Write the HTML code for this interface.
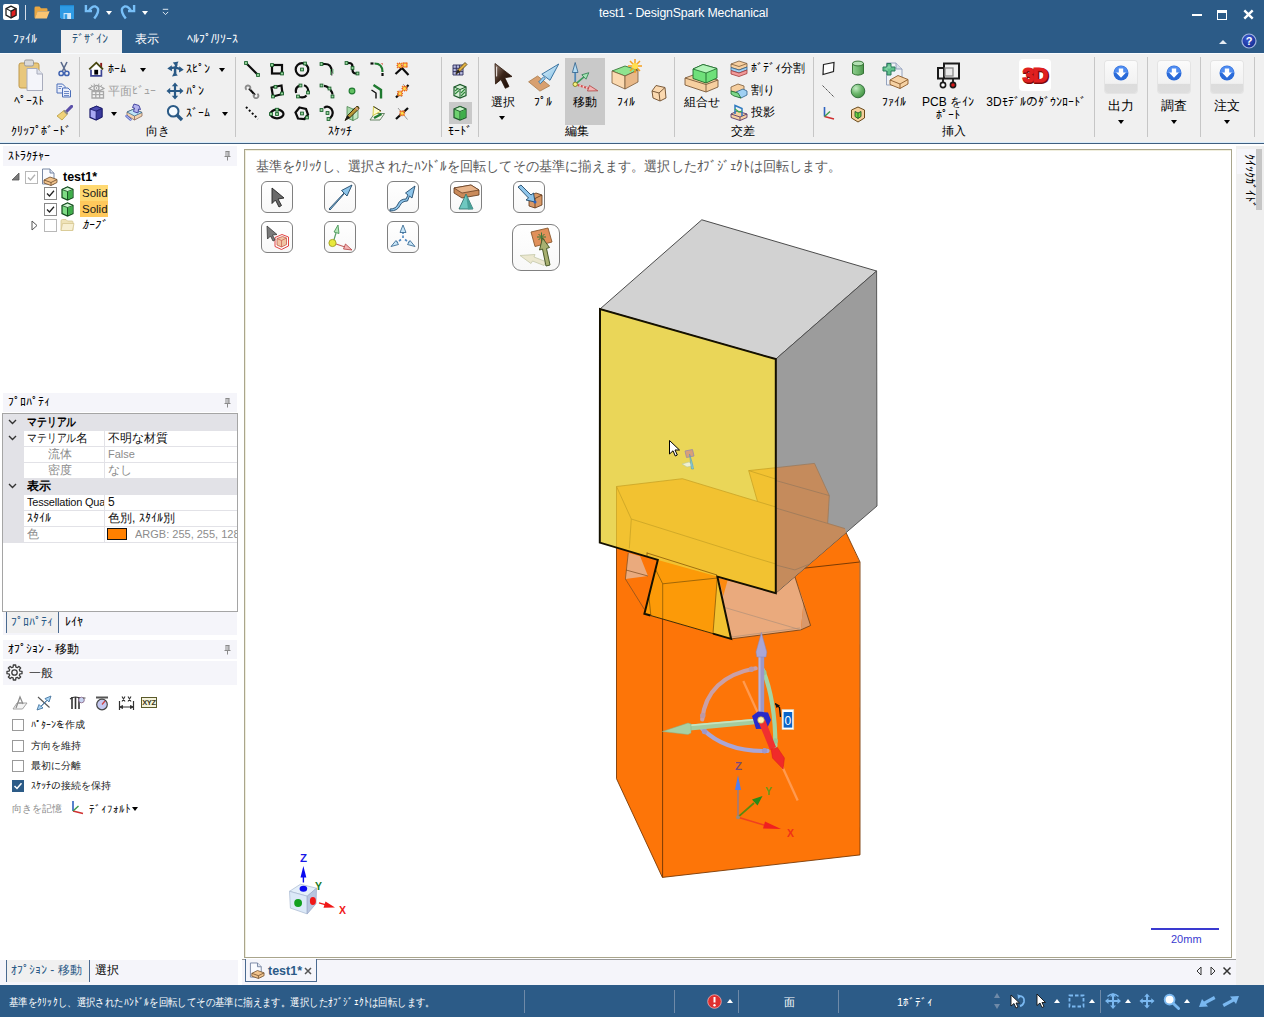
<!DOCTYPE html>
<html lang="ja">
<head>
<meta charset="utf-8">
<title>test1 - DesignSpark Mechanical</title>
<style>
*{box-sizing:border-box;margin:0;padding:0}
html,body{width:1264px;height:1017px;overflow:hidden;background:#fff}
body{position:relative;font-family:"Liberation Sans",sans-serif;font-size:12px;color:#000;line-height:1}
.a{position:absolute}
.t{position:absolute;white-space:nowrap;line-height:14px;height:14px}
.c{text-align:center}
/* title */
#title{left:0;top:0;width:1264px;height:53px;background:#2c5b87}
#title .cap{left:599px;top:5px;color:#fff;font-size:12.3px;line-height:16px;height:16px;letter-spacing:-.15px}
.tab{color:#fff;font-size:12px;top:32px}
#tabon{left:61px;top:30px;width:61px;height:23px;background:#f0f0f0}
/* ribbon */
#ribbon{left:0;top:53px;width:1264px;height:89px;background:#f0f0f0}
#ribline{left:0;top:142px;width:1264px;height:2px;background:#3f5f80;border-top:1px solid #d9ecfb}
.sep{position:absolute;top:57px;width:1px;height:80px;background:#c6c6c6}
.gl{top:124px;font-size:12px}
.dd{position:absolute;width:0;height:0;border-left:3.5px solid transparent;border-right:3.5px solid transparent;border-top:4px solid #000}
.hl{background:#c9c9c9}
/* panels */
.ph{left:3px;width:234px;height:20px;background:#f5f5fa}
.ph .t{left:5px;top:3px}
.pin{position:absolute;right:6px;top:5px;width:7px;height:10px}
/* status */
#status{left:0;top:985px;width:1264px;height:32px;background:#2c5b87;color:#fff}
.ssep{position:absolute;top:5px;width:1px;height:23px;background:#6f8aa8}
</style>
</head>
<body>
<!-- TITLE BAR -->
<div id="title" class="a">
  <div class="t cap">test1 - DesignSpark Mechanical</div>

  <!-- app icon -->
  <svg class="a" style="left:3px;top:4px" width="16" height="16" viewBox="0 0 16 16"><rect width="16" height="16" rx="2" fill="#fff"/><path d="M8 2.2 13 4.6 13 11.2 8 13.8 3 11.2 3 4.6Z" fill="#fff" stroke="#222" stroke-width="1.3" stroke-linejoin="round"/><path d="M8 7.2 13 4.6 13 11.2 8 13.8Z" fill="#e02020" stroke="#222" stroke-width="1.1" stroke-linejoin="round"/><path d="M3 4.6 8 7.2 13 4.6" fill="none" stroke="#222" stroke-width="1.1"/></svg>
  <div class="a" style="left:25px;top:5px;width:1px;height:15px;background:#d5dde8"></div>
  <!-- open -->
  <svg class="a" style="left:34px;top:6px" width="16" height="13" viewBox="0 0 16 13"><path d="M0.5 2Q0.5 0.6 2 0.6H5.5L7 2.2H12.5Q13.5 2.2 13.5 3.4V5H4L1.2 12.4Q0.5 12.4 0.5 11Z" fill="#e9a640"/><path d="M3.6 5.2H15.6L12.8 12.4H0.9Z" fill="#fbc572"/></svg>
  <!-- save -->
  <svg class="a" style="left:60px;top:5px" width="14" height="14" viewBox="0 0 14 14"><path d="M0 0H14V14H1.5L0 12.5Z" fill="#2f9be4"/><rect x="3.6" y="8" width="7.4" height="6" fill="#cfe6f7"/><rect x="4.6" y="9.2" width="2.6" height="4.8" fill="#2f9be4"/><rect x="0" y="0" width="14" height="1.2" fill="#1f86cf"/></svg>
  <!-- undo -->
  <svg class="a" style="left:84px;top:4px" width="17" height="16" viewBox="0 0 17 16"><path d="M5 6.800Q8 1.800 11.500 2.500Q15.200 4 13.800 8.300Q13 11 10.200 14.400" fill="none" stroke="#78c0f8" stroke-width="2.400"/><path d="M1.900 .9V7.100H8" fill="none" stroke="#78c0f8" stroke-width="2.400"/></svg>
  <div class="dd" style="left:106px;top:11px;border-top-color:#fff"></div>
  <!-- redo -->
  <svg class="a" style="left:119px;top:4px" width="17" height="16" viewBox="0 0 17 16"><g transform="translate(17,0) scale(-1,1)"><path d="M5 6.800Q8 1.800 11.500 2.500Q15.200 4 13.800 8.300Q13 11 10.200 14.400" fill="none" stroke="#78c0f8" stroke-width="2.400"/><path d="M1.900 .9V7.100H8" fill="none" stroke="#78c0f8" stroke-width="2.400"/></g></svg>
  <div class="dd" style="left:142px;top:11px;border-top-color:#fff"></div>
  <!-- customize -->
  <svg class="a" style="left:162px;top:8px" width="7" height="8" viewBox="0 0 7 8"><path d="M.8 1.300H6.200" stroke="#dfe8f0" stroke-width="1"/><path d="M.8 3.900 3.500 6.600 6.200 3.900" fill="none" stroke="#dfe8f0" stroke-width="1"/></svg>
  <!-- window controls -->
  <div class="a" style="left:1192px;top:14px;width:10px;height:2px;background:#fff"></div>
  <div class="a" style="left:1217px;top:10px;width:10px;height:10px;border:1px solid #fff;border-top-width:3px"></div>
  <svg class="a" style="left:1243px;top:9px" width="11" height="11" viewBox="0 0 11 11"><path d="M1.300 1.300 9.700 9.700M9.700 1.300 1.300 9.700" stroke="#fff" stroke-width="2.400"/></svg>
  <div class="a" style="left:1219px;top:40px;width:0;height:0;border-left:4px solid transparent;border-right:4px solid transparent;border-bottom:4px solid #e6ecf3"></div>
  <svg class="a" style="left:1241px;top:33px" width="16" height="16" viewBox="0 0 16 16"><defs><radialGradient id="ghelp" cx=".4" cy=".3" r=".8"><stop offset="0" stop-color="#3a5ad0"/><stop offset="1" stop-color="#10268a"/></radialGradient></defs><circle cx="8" cy="8" r="7" fill="url(#ghelp)" stroke="#a4b6e0" stroke-width="1.200"/><text x="8" y="12" text-anchor="middle" font-family="Liberation Sans" font-weight="bold" font-size="11" fill="#fff">?</text></svg>
  <div id="tabon" class="a"></div>
  <div class="t tab" style="left:13px">ﾌｧｲﾙ</div>
  <div class="t tab" style="left:72px;color:#2c5478">ﾃﾞｻﾞｲﾝ</div>
  <div class="t tab" style="left:135px">表示</div>
  <div class="t tab" style="left:187px">ﾍﾙﾌﾟ/ﾘｿｰｽ</div>
</div>
<!-- RIBBON -->
<div id="ribbon" class="a"></div>
<div id="ribline" class="a"></div>
<div class="a" style="left:0;top:53px;width:1264px;height:1px;background:#f8fbfe"></div>

<!-- separators -->
<div class="sep" style="left:79px"></div><div class="sep" style="left:235px"></div><div class="sep" style="left:441px"></div><div class="sep" style="left:478px"></div><div class="sep" style="left:674px"></div><div class="sep" style="left:813px"></div><div class="sep" style="left:1094px"></div><div class="sep" style="left:1147px"></div><div class="sep" style="left:1200px"></div><div class="sep" style="left:1254px"></div>
<!-- CLIPBOARD -->
<svg class="a" style="left:18px;top:59px" width="26" height="33" viewBox="0 0 26 33"><rect x="1" y="4" width="20" height="25" rx="2" fill="#e8c77c" stroke="#c09a4c"/><rect x="6.5" y="1" width="9" height="6" rx="1.5" fill="#d9d9d9" stroke="#9a9a9a"/><path d="M9 9.5H19L24.5 15V31.5H9Z" fill="#f4f5fa" stroke="#a8acbc"/><path d="M19 9.5V15H24.5" fill="#dfe2ec" stroke="#a8acbc"/></svg>
<div class="t c" style="left:6px;top:94px;width:46px;overflow:hidden">ﾍﾟｰｽﾄ</div>
<div class="t c gl" style="left:4px;width:74px;overflow:hidden">ｸﾘｯﾌﾟﾎﾞｰﾄﾞ</div>
<svg class="a" style="left:57px;top:61px" width="14" height="16" viewBox="0 0 14 16"><path d="M4 1 8.5 10M10 1 5.5 10" stroke="#5a6a8c" stroke-width="1.6" fill="none"/><circle cx="4.2" cy="12.4" r="2.2" fill="none" stroke="#3f62b0" stroke-width="1.5"/><circle cx="9.8" cy="12.4" r="2.2" fill="none" stroke="#3f62b0" stroke-width="1.5"/></svg>
<svg class="a" style="left:56px;top:83px" width="16" height="15" viewBox="0 0 16 15"><path d="M1 1H6.5L9 3.5V10H1Z" fill="#e9eefb" stroke="#4c6fb8"/><path d="M6.5 5H12L14.5 7.5V14H6.5Z" fill="#e9eefb" stroke="#4c6fb8"/><path d="M8 8.5H13M8 10.5H13M8 12.5H13M2.5 3.5H6M2.5 5.5H5" stroke="#4c6fb8" stroke-width=".8"/></svg>
<svg class="a" style="left:56px;top:105px" width="17" height="16" viewBox="0 0 17 16"><path d="M10.5 6.5 15.6 1.4" stroke="#5a4fa8" stroke-width="3" stroke-linecap="round"/><path d="M1 11 8 5.5 11.5 9 6 15Z" fill="#f0d27a" stroke="#b89a3c" stroke-width=".8"/><path d="M8 5.5 11.5 9" stroke="#8a8a8a" stroke-width="2"/></svg>
<!-- ORIENT -->
<svg class="a" style="left:88px;top:61px" width="16" height="16" viewBox="0 0 16 16"><rect x="12.200" y="1.900" width="1.900" height="5" fill="#8a1a1a"/><path d="M3 8.400V14.800H13.400V8.400" fill="#fff" stroke="#3c4494" stroke-width="1.700"/><path d="M3 8.600 8.300 3.500 13.400 8.600Z" fill="#fff"/><rect x="6.300" y="8.800" width="3.800" height="4.800" fill="#000"/><path d="M1.200 8.300 8.300 1.700 15 8.300" fill="none" stroke="#47470f" stroke-width="1.800"/></svg>
<div class="t" style="left:108px;top:62px;width:26px;overflow:hidden">ﾎｰﾑ</div><div class="dd" style="left:140px;top:68px"></div>
<svg class="a" style="left:88px;top:83px" width="17" height="16" viewBox="0 0 17 16"><path d="M1 5.500Q8.500 -.5 16 5.500Q8.500 10.500 1 5.500Z" fill="#f4f4f4" stroke="#a4a4a4" stroke-width="1.200"/><circle cx="8.500" cy="5" r="2.500" fill="#fff" stroke="#a4a4a4" stroke-width="1.300"/><circle cx="8.500" cy="5" r=".9" fill="#a4a4a4"/><path d="M3 1.800 4 3M6 .6 6.500 2M11 .6 10.500 2M14 1.800 13 3" stroke="#a4a4a4" stroke-width=".9"/><path d="M4 8.500H15.500V15H4ZM4 11.700H15.500M7.800 8.500V15M11.600 8.500V15" fill="#f4f4f4" stroke="#a8a8a8" stroke-width="1.300"/></svg>
<div class="t" style="left:108px;top:84px;width:50px;overflow:hidden;color:#a2a2a2">平面ﾋﾞｭｰ</div>
<svg class="a" style="left:89px;top:105px" width="14" height="16" viewBox="0 0 14 16"><path d="M1 4 7.500 1.200 13 3.600V12L7 15 1 12.400Z" fill="#a8a8f4" stroke="#1a1a6a" stroke-width="1.200" stroke-linejoin="round"/><path d="M1 4 7.500 1.200 13 3.600 7.200 6.200Z" fill="#4c4cb0" stroke="#1a1a6a" stroke-width=".8"/><path d="M7.200 6.200 13 3.600V12L7 15Z" fill="#3a3a9c" stroke="#1a1a6a" stroke-width=".8"/></svg>
<div class="dd" style="left:111px;top:112px"></div>
<svg class="a" style="left:125px;top:103px" width="18" height="18" viewBox="0 0 18 18"><path d="M2 9 9 6 17 9.500V13L9.500 17 2 12.500Z" fill="#f2d2b0" stroke="#8a6a5a" stroke-width=".8"/><path d="M2 9 9 6 17 9.500 9.500 13Z" fill="#bfe4f6" stroke="#3a6a8a" stroke-width=".8"/><path d="M9.500 13V17" stroke="#8a6a5a" stroke-width=".8"/><path d="M9 1 14 2.500 15.500 6.500 13.500 6 13 10 8.500 8.500 9.500 5 7.500 4.500Z" fill="#b4b4ee" stroke="#3a3a9a" stroke-width=".9"/><path d="M1.500 13 5.500 16.500" stroke="#5a6ac8" stroke-width="2.400" stroke-linecap="round"/><path d="M1.500 13 5.500 16.500" stroke="#c8d0f4" stroke-width="1" stroke-linecap="round"/></svg>
<svg class="a" style="left:167px;top:61px" width="17" height="16" viewBox="0 0 17 16"><path d="M3 7.600Q8 5.200 13.500 8.300" fill="none" stroke="#2a5a86" stroke-width="2.300"/><path d="M9.700 3Q7.200 8 8.300 13" fill="none" stroke="#2a5a86" stroke-width="2.300"/><path d="M.3 7.600 4.800 4.300 5 10.300ZM16.700 8.800 12.300 5.300 12 11.500ZM11.500 .6 5.800 1.600 9.200 5.800ZM5 15.600 10.800 14.400 7.500 10.500Z" fill="#2a5a86"/></svg>
<div class="t" style="left:186px;top:62px;width:26px;overflow:hidden">ｽﾋﾟﾝ</div><div class="dd" style="left:219px;top:68px"></div>
<svg class="a" style="left:166px;top:82px" width="18" height="18" viewBox="0 0 18 18"><path d="M9 .5 12.2 4.2H10.100V7.900H13.800V5.800L17.500 9 13.800 12.200V10.100H10.100V13.800H12.200L9 17.500 5.800 13.800H7.900V10.100H4.200V12.200L.5 9 4.200 5.800V7.900H7.900V4.200H5.800Z" fill="#2a5a86"/></svg>
<div class="t" style="left:186px;top:84px;width:20px;overflow:hidden">ﾊﾟﾝ</div>
<svg class="a" style="left:166px;top:104px" width="18" height="18" viewBox="0 0 18 18"><circle cx="7.200" cy="7.200" r="5.300" fill="#f6fbff" stroke="#2a5a86" stroke-width="2"/><path d="M11 11 16 16" stroke="#2a5a86" stroke-width="3.300"/></svg>
<div class="t" style="left:186px;top:106px;width:28px;overflow:hidden">ｽﾞｰﾑ</div><div class="dd" style="left:222px;top:112px"></div>
<div class="t c gl" style="left:140px;width:36px;overflow:hidden">向き</div>
<!-- SKETCH -->
<svg class="a" style="left:244px;top:61px" width="16" height="16" viewBox="0 0 16 16"><path d="M2.500 2.500 13.500 13.500" stroke="#0c0c0c" stroke-width="2.200" fill="none"/><rect x="0.6000000000000001" y="0.6000000000000001" width="2.8" height="2.8" fill="#9ed8a2" stroke="#17602a" stroke-width=".9"/><rect x="12.6" y="12.6" width="2.8" height="2.8" fill="#9ed8a2" stroke="#17602a" stroke-width=".9"/></svg>
<svg class="a" style="left:269px;top:61px" width="16" height="16" viewBox="0 0 16 16"><rect x="3" y="4" width="10" height="8.500" stroke="#0c0c0c" stroke-width="2.200" fill="none"/><rect x="1.6" y="2.6" width="2.8" height="2.8" fill="#9ed8a2" stroke="#17602a" stroke-width=".9"/><rect x="11.6" y="11.1" width="2.8" height="2.8" fill="#9ed8a2" stroke="#17602a" stroke-width=".9"/></svg>
<svg class="a" style="left:294px;top:61px" width="16" height="16" viewBox="0 0 16 16"><circle cx="8" cy="8.500" r="6.300" stroke="#0c0c0c" stroke-width="2.200" fill="none"/><rect x="6.6" y="7.1" width="2.8" height="2.8" fill="#9ed8a2" stroke="#17602a" stroke-width=".9"/><rect x="9.6" y="1.1" width="2.8" height="2.8" fill="#9ed8a2" stroke="#17602a" stroke-width=".9"/></svg>
<svg class="a" style="left:319px;top:61px" width="16" height="16" viewBox="0 0 16 16"><path d="M2.500 3H6Q12.500 3 12.500 10V12" stroke="#0c0c0c" stroke-width="2.200" fill="none"/><path d="M11.500 8V14M14 8V13" stroke="#6fb87c" stroke-width="1"/><path d="M12.700 10.500V14.500" stroke="#555" stroke-width="1.400"/><rect x="1.1" y="1.6" width="2.8" height="2.8" fill="#9ed8a2" stroke="#17602a" stroke-width=".9"/></svg>
<svg class="a" style="left:344px;top:61px" width="16" height="16" viewBox="0 0 16 16"><path d="M2.500 2H5Q8.500 2 8.500 5.500V8.500Q8.500 12.500 12 12.500H13" stroke="#0c0c0c" stroke-width="2.200" fill="none"/><rect x="1.1" y="0.6000000000000001" width="2.8" height="2.8" fill="#9ed8a2" stroke="#17602a" stroke-width=".9"/><rect x="7.1" y="5.6" width="2.8" height="2.8" fill="#9ed8a2" stroke="#17602a" stroke-width=".9"/><rect x="12.1" y="11.1" width="2.8" height="2.8" fill="#9ed8a2" stroke="#17602a" stroke-width=".9"/></svg>
<svg class="a" style="left:369px;top:61px" width="16" height="16" viewBox="0 0 16 16"><path d="M1.500 2.500H4.500" stroke="#0c0c0c" stroke-width="2.200" fill="none"/><path d="M13.500 12V15" stroke="#0c0c0c" stroke-width="2.200" fill="none"/><path d="M5.500 2.500Q13.500 2.500 13.500 11" stroke="#1f7a30" stroke-width="2.200" fill="none"/><path d="M11.500 2 14 2 14 4.500Z" fill="#e08a7a"/></svg>
<svg class="a" style="left:394px;top:61px" width="16" height="16" viewBox="0 0 16 16"><path d="M1.500 13 8 7 14.500 14" stroke="#0c0c0c" stroke-width="2.200" fill="none"/><path d="M3.1 2.1 7.9 6.9M7.9 2.1 3.1 6.9" stroke="#f07818" stroke-width="1.600"/><path d="M2.5 4.5H8.5M5.5 1.5V7.5" stroke="#e8481c" stroke-width=".9"/><circle cx="5.5" cy="4.5" r="1.500" fill="#ffe04a"/><path d="M8.6 1.6 13.4 6.4M13.4 1.6 8.6 6.4" stroke="#f07818" stroke-width="1.600"/><path d="M8.0 4H14.0M11 1.0V7.0" stroke="#e8481c" stroke-width=".9"/><circle cx="11" cy="4" r="1.500" fill="#ffe04a"/></svg>
<svg class="a" style="left:244px;top:83px" width="16" height="16" viewBox="0 0 16 16"><path d="M5 5.500 11 12" stroke="#0c0c0c" stroke-width="2"/><path d="M5.800 6.400A2.400 2.400 0 1 0 2.600 6.800" fill="none" stroke="#8c8c8c" stroke-width="1.900"/><path d="M10.200 11.200A2.400 2.400 0 1 0 13.400 10.800" fill="none" stroke="#8c8c8c" stroke-width="1.900"/></svg>
<svg class="a" style="left:269px;top:83px" width="16" height="16" viewBox="0 0 16 16"><path d="M2.500 4.500 12.500 2.500 13.500 11 4 13.500Z" stroke="#0c0c0c" stroke-width="2.200" fill="none"/><rect x="5.1" y="2.4" width="2.8" height="2.8" fill="#9ed8a2" stroke="#17602a" stroke-width=".9"/><rect x="11.6" y="9.1" width="2.8" height="2.8" fill="#9ed8a2" stroke="#17602a" stroke-width=".9"/><rect x="2.6" y="12.1" width="2.8" height="2.8" fill="#9ed8a2" stroke="#17602a" stroke-width=".9"/></svg>
<svg class="a" style="left:294px;top:83px" width="16" height="16" viewBox="0 0 16 16"><path d="M10 2.300A6.200 6.200 0 0 1 14 9.500M12.500 12.500A6.200 6.200 0 0 1 4 13M2.200 10A6.200 6.200 0 0 1 5 2.800" stroke="#0c0c0c" stroke-width="2.200" fill="none"/><rect x="5.1" y="1.1" width="2.8" height="2.8" fill="#9ed8a2" stroke="#17602a" stroke-width=".9"/><rect x="12.6" y="8.1" width="2.8" height="2.8" fill="#9ed8a2" stroke="#17602a" stroke-width=".9"/><rect x="2.6" y="12.1" width="2.8" height="2.8" fill="#9ed8a2" stroke="#17602a" stroke-width=".9"/></svg>
<svg class="a" style="left:319px;top:83px" width="16" height="16" viewBox="0 0 16 16"><path d="M5 2.800Q8 3 9.500 5M11.500 7Q13.500 9.500 13.500 11.500" stroke="#0c0c0c" stroke-width="2.200" fill="none"/><rect x="1.1" y="1.1" width="2.8" height="2.8" fill="#9ed8a2" stroke="#17602a" stroke-width=".9"/><rect x="9.1" y="4.1" width="2.8" height="2.8" fill="#9ed8a2" stroke="#17602a" stroke-width=".9"/><rect x="12.1" y="12.1" width="2.8" height="2.8" fill="#9ed8a2" stroke="#17602a" stroke-width=".9"/></svg>
<svg class="a" style="left:344px;top:83px" width="16" height="16" viewBox="0 0 16 16"><circle cx="8" cy="8" r="2.900" fill="#62c062" stroke="#1f7a30" stroke-width="1.100"/></svg>
<svg class="a" style="left:369px;top:83px" width="16" height="16" viewBox="0 0 16 16"><path d="M2.500 7 7 10V15.500" stroke="#0c0c0c" stroke-width="1.400" fill="none"/><path d="M4.500 2 12 7V15.500" stroke="#1f7a30" stroke-width="2.400" fill="none"/></svg>
<svg class="a" style="left:394px;top:83px" width="16" height="16" viewBox="0 0 16 16"><path d="M2 14.500 5 11.500M12 4.500 14.500 2" stroke="#0c0c0c" stroke-width="2.200"/><path d="M9 1 14 7M3 8 8 14" stroke="#9a9a9a" stroke-width=".9"/><path d="M3.6 8.1 8.4 12.9M8.4 8.1 3.6 12.9" stroke="#f07818" stroke-width="1.600"/><path d="M3.0 10.5H9.0M6 7.5V13.5" stroke="#e8481c" stroke-width=".9"/><circle cx="6" cy="10.5" r="1.500" fill="#ffe04a"/><path d="M8.1 3.1 12.9 7.9M12.9 3.1 8.1 7.9" stroke="#f07818" stroke-width="1.600"/><path d="M7.5 5.5H13.5M10.5 2.5V8.5" stroke="#e8481c" stroke-width=".9"/><circle cx="10.5" cy="5.5" r="1.500" fill="#ffe04a"/></svg>
<svg class="a" style="left:244px;top:105px" width="16" height="16" viewBox="0 0 16 16"><path d="M2 2 14 14" stroke="#0c0c0c" stroke-width="2" stroke-dasharray="2 2.200"/></svg>
<svg class="a" style="left:269px;top:105px" width="16" height="16" viewBox="0 0 16 16"><ellipse cx="8" cy="9" rx="6.500" ry="4.300" stroke="#0c0c0c" stroke-width="2.200" fill="none"/><rect x="6.6" y="7.6" width="2.8" height="2.8" fill="#9ed8a2" stroke="#17602a" stroke-width=".9"/><rect x="6.6" y="3.3000000000000003" width="2.8" height="2.8" fill="#9ed8a2" stroke="#17602a" stroke-width=".9"/><rect x="0.6000000000000001" y="7.6" width="2.8" height="2.8" fill="#9ed8a2" stroke="#17602a" stroke-width=".9"/></svg>
<svg class="a" style="left:294px;top:105px" width="16" height="16" viewBox="0 0 16 16"><path d="M5.500 2.500 12 4 14 9.500 10.500 14 4 13.500 1.500 7.500Z" stroke="#0c0c0c" stroke-width="2.200" fill="none"/><rect x="6.6" y="7.1" width="2.8" height="2.8" fill="#9ed8a2" stroke="#17602a" stroke-width=".9"/><rect x="11.6" y="11.1" width="2.8" height="2.8" fill="#9ed8a2" stroke="#17602a" stroke-width=".9"/></svg>
<svg class="a" style="left:319px;top:105px" width="16" height="16" viewBox="0 0 16 16"><path d="M5 2.800Q9 0 12.500 4Q15.500 9 11 13.500" stroke="#0c0c0c" stroke-width="2.200" fill="none"/><rect x="1.1" y="3.6" width="2.8" height="2.8" fill="#9ed8a2" stroke="#17602a" stroke-width=".9"/><rect x="7.1" y="6.6" width="2.8" height="2.8" fill="#9ed8a2" stroke="#17602a" stroke-width=".9"/><rect x="8.1" y="12.6" width="2.8" height="2.8" fill="#9ed8a2" stroke="#17602a" stroke-width=".9"/></svg>
<svg class="a" style="left:344px;top:105px" width="16" height="16" viewBox="0 0 16 16"><path d="M3 1.500 9 4V15.500L3 13Z" fill="#a8d8a8" stroke="#3c7a44" stroke-width=".7"/><path d="M9 4 14 1.500V13L9 15.500Z" fill="#c4e8c4" stroke="#3c7a44" stroke-width=".7"/><path d="M1 15.500 3.500 10.500 12.500 1.500Q14.500 .8 15.200 3.500L6 12.500Z" fill="#b89838" stroke="#2a2008" stroke-width=".9"/><path d="M1 15.500 3.500 10.500 6 12.500Z" fill="#1a1a1a"/><path d="M11.500 2.500 14.200 5" stroke="#d89a8a" stroke-width="1.200"/></svg>
<svg class="a" style="left:369px;top:105px" width="16" height="16" viewBox="0 0 16 16"><path d="M1 15 5.500 8.500H15.500L11 15Z" fill="#f4f4ec" stroke="#5a7a5a" stroke-width=".9"/><path d="M4.500 1.500 12 6 4 10.500Z" fill="#fdfbd0" stroke="#d8d048" stroke-width="1"/><path d="M4.500 1.500 12 6" stroke="#333" stroke-width="1"/><path d="M5 13 12.500 9" stroke="#1f7a30" stroke-width="2.400"/></svg>
<svg class="a" style="left:394px;top:105px" width="16" height="16" viewBox="0 0 16 16"><path d="M2 14 14 3" stroke="#0c0c0c" stroke-width="2.200"/><path d="M4 3 13.500 14.500" stroke="#9a9a9a" stroke-width="1"/><path d="M5.799999999999999 5.799999999999999 10.6 10.6M10.6 5.799999999999999 5.799999999999999 10.6" stroke="#f07818" stroke-width="1.600"/><path d="M5.199999999999999 8.2H11.2M8.2 5.199999999999999V11.2" stroke="#e8481c" stroke-width=".9"/><circle cx="8.2" cy="8.2" r="1.500" fill="#ffe04a"/></svg>
<div class="t c gl" style="left:318px;width:44px;overflow:hidden">ｽｹｯﾁ</div>
<!-- MODE -->
<div class="a hl" style="left:449px;top:102px;width:23px;height:22px"></div>
<svg class="a" style="left:452px;top:61px" width="16" height="16" viewBox="0 0 16 16"><path d="M1 4H11V14H1ZM1 7.300H11M1 10.600H11M4.300 4V14M7.600 4V14" fill="#b8bce0" stroke="#2a2a5a" stroke-width=".9"/><path d="M4 13 6 8.500 13 1.500 15 3.500 8 10.500Z" fill="#e0b040" stroke="#4a3a10" stroke-width=".8"/><path d="M4 13 6 8.500 8 10.500Z" fill="#222"/></svg>
<svg class="a" style="left:453px;top:83px" width="14" height="16" viewBox="0 0 14 16"><path d="M1 4 7 1.500 13 4V12.500L7 15 1 12.500Z" fill="#d7f0d7" stroke="#1d5a2a" stroke-width="1.2"/><path d="M1 4 7 6.500 13 4M7 6.500V15" fill="none" stroke="#1d5a2a"/><path d="M2 11 6 7.500M2 8 5 5.500M8 13 12 9M8 10 12 6" stroke="#2e8b3a" stroke-width="1.200"/></svg>
<svg class="a" style="left:453px;top:105px" width="14" height="16" viewBox="0 0 14 16"><path d="M1 4 7 1.500 13 4V12.500L7 15 1 12.500Z" fill="#6fd26f" stroke="#1d5a2a" stroke-width="1.200"/><path d="M1 4 7 6.500 13 4 7 1.500Z" fill="#c6f2c6" stroke="#1d5a2a" stroke-width=".9"/><path d="M7 6.500V15" stroke="#1d5a2a"/><path d="M7.500 7 12.500 4.800V12.200L7.500 14.400Z" fill="#3fae4a"/></svg>
<div class="t c gl" style="left:443px;width:34px;overflow:hidden">ﾓｰﾄﾞ</div>
<!-- EDIT -->
<div class="a hl" style="left:565px;top:58px;width:40px;height:67px"></div>
<svg class="a" style="left:493px;top:62px" width="21" height="28" viewBox="0 0 21 28"><defs><linearGradient id="gsel" x1="0" y1="0" x2="1" y2="1"><stop offset="0" stop-color="#9a8478"/><stop offset=".45" stop-color="#3a2418"/><stop offset="1" stop-color="#140804"/></linearGradient></defs><path d="M2 1.500 19 14.500 11.800 15.800 16 24.500 12.300 26.300 8 17.500 2.500 22Z" fill="url(#gsel)" stroke="#2a1408" stroke-width=".8"/><path d="M3.600 5V14" stroke="#e8e0dc" stroke-width="1.100" stroke-linecap="round"/></svg>
<div class="t c" style="left:488px;top:95px;width:30px;overflow:hidden">選択</div><div class="dd" style="left:499px;top:116px"></div>
<svg class="a" style="left:527px;top:62px" width="33" height="32" viewBox="0 0 33 32"><defs><linearGradient id="gpull" x1="0" y1="0" x2="1" y2="1"><stop offset="0" stop-color="#e4f4fc"/><stop offset="1" stop-color="#7cbce4"/></linearGradient></defs><path d="M1.600 19.800 10.600 14 22.700 23.800 12.900 29.100Z" fill="#d8a070" stroke="#a87848" stroke-width=".8"/><path d="M11.600 20 16.500 14.800 18.300 16.500 13.400 21.700Z" fill="#9cd0f0" stroke="#2d6a9a" stroke-width=".8"/><path d="M14.800 12.200 31.700 2 23 18.300Z" fill="url(#gpull)" stroke="#2d6a9a" stroke-width=".9" stroke-linejoin="round"/></svg>
<div class="t c" style="left:530px;top:95px;width:26px;overflow:hidden">ﾌﾟﾙ</div>
<svg class="a" style="left:569px;top:60px" width="34" height="34" viewBox="0 0 34 34"><path d="M6.200 24V11" stroke="#4f88b8" stroke-width="1.800"/><path d="M6.200 2.500 9 12.500H3.400Z" fill="#b4dcf4" stroke="#2d5f8a" stroke-width=".8"/><path d="M6.200 24.300 15 16.800" stroke="#3c9a5c" stroke-width="1.600"/><path d="M19.800 12.700 17 19.200 12.800 14.800Z" fill="#a4e4b4" stroke="#2a7a4a" stroke-width=".8"/><path d="M7 24.500 20 28.500" stroke="#d05050" stroke-width="2"/><path d="M7 24.500 20 28.500" stroke="#f8d0d0" stroke-width="2" stroke-dasharray="1.500 2"/><path d="M28.800 30.800 18.500 31 20.500 25.500Z" fill="#f4b4b4" stroke="#b04040" stroke-width=".8"/><circle cx="6.200" cy="24.300" r="2.200" fill="#f4f080" stroke="#7a7a20" stroke-width=".9"/></svg>
<div class="t c" style="left:570px;top:95px;width:30px;overflow:hidden">移動</div>
<svg class="a" style="left:610px;top:58px" width="34" height="36" viewBox="0 0 34 36"><path d="M2 13 15 8 28 12 15 18Z" fill="#8fe48f" stroke="#2a6a2a" stroke-width=".8"/><path d="M2 13 15 18V31L2 25Z" fill="#fbd9b0" stroke="#7a5a3a" stroke-width=".8"/><path d="M15 18 28 12V24L15 31Z" fill="#e8b888" stroke="#7a5a3a" stroke-width=".8"/><path d="M25 1V15M18 8H32M20 3 30 13M30 3 20 13" stroke="#f5a020" stroke-width="1.500"/><circle cx="25" cy="8" r="3" fill="#ffe050"/></svg>
<div class="t c" style="left:612px;top:95px;width:28px;overflow:hidden">ﾌｨﾙ</div>
<svg class="a" style="left:651px;top:84px" width="16" height="18" viewBox="0 0 16 18"><path d="M5 1.500 14 3.500 15 14 9 17 2 14 1 7Z" fill="#fbd9b0" stroke="#7a5a3a" stroke-width="1"/><path d="M1 7 8 9 9 17M8 9 14 3.500" fill="none" stroke="#7a5a3a"/></svg>
<div class="t c gl" style="left:560px;width:34px;overflow:hidden">編集</div>
<!-- INTERSECT -->
<svg class="a" style="left:684px;top:61px" width="36" height="32" viewBox="0 0 36 32"><path d="M1 17 12 13 34 19V26L22 31 1 24Z" fill="#f6cfa0" stroke="#7a5a3a" stroke-width=".9"/><path d="M1 17 22 23.500 34 19M22 23.500V31" fill="none" stroke="#7a5a3a" stroke-width=".9"/><path d="M9 8 19 3.500 33 7.500V17L22 22 9 17.500Z" fill="#6fe07a" stroke="#1d6a2a" stroke-width=".9"/><path d="M9 8 22 12 33 7.500 19 3.500Z" fill="#b4f4ba" stroke="#1d6a2a" stroke-width=".8"/><path d="M22 12V22" stroke="#1d6a2a" stroke-width=".9"/></svg>
<div class="t c" style="left:682px;top:95px;width:40px;overflow:hidden">組合せ</div>
<svg class="a" style="left:730px;top:60px" width="18" height="17" viewBox="0 0 18 17"><path d="M1 4 9 1 17 3.500V7L9 10 1 7.500Z" fill="#f6cfa0" stroke="#7a5a3a" stroke-width=".8"/><path d="M1 7.500 9 10 17 7V10L9 13 1 10.500Z" fill="#9fd0f2" stroke="#2d5f8a" stroke-width=".8"/><path d="M1 10.500 9 13 17 10V13.500L9 16.500 1 14Z" fill="#f29a9a" stroke="#a03a3a" stroke-width=".8"/><path d="M1 4 9 6.500 17 3.500" fill="none" stroke="#7a5a3a" stroke-width=".8"/></svg>
<div class="t" style="left:751px;top:61px;width:54px;overflow:hidden">ﾎﾞﾃﾞｨ分割</div>
<svg class="a" style="left:730px;top:82px" width="18" height="17" viewBox="0 0 18 17"><path d="M1 5 8 2 14 4V8L8 11 1 9Z" fill="#f6cfa0" stroke="#7a5a3a" stroke-width=".8"/><path d="M6 10 13 7 17 9V13L11 16 6 14Z" fill="#9fd0f2" stroke="#2d5f8a" stroke-width=".8"/><path d="M1 9 8 11 11 16 4 14 1 12Z" fill="#7fd88a" stroke="#1d6a2a" stroke-width=".8"/></svg>
<div class="t" style="left:751px;top:83px;width:24px;overflow:hidden">割り</div>
<svg class="a" style="left:730px;top:103px" width="18" height="18" viewBox="0 0 18 18"><path d="M1 11 7 8 17 11V14.500L10 17.500 1 14.500Z" fill="#f6cfa0" stroke="#5a3a6a" stroke-width=".9"/><path d="M1 11 10 14 17 11M10 14V17.500" fill="none" stroke="#5a3a6a" stroke-width=".9"/><path d="M5 11V2.500L12 5.500V13" fill="none" stroke="#2d7ac0" stroke-width="1.500"/><path d="M5 6 9 9 12 8" fill="none" stroke="#3cae4a" stroke-width="1.200"/></svg>
<div class="t" style="left:751px;top:105px;width:26px;overflow:hidden">投影</div>
<div class="t c gl" style="left:726px;width:34px;overflow:hidden">交差</div>
<!-- INSERT -->
<svg class="a" style="left:821px;top:61px" width="15" height="15" viewBox="0 0 15 15"><path d="M2.500 3.500 13 1.500 12.500 10.500 2 13.500Z" fill="#fdfdfd" stroke="#222" stroke-width="1.200"/></svg>
<svg class="a" style="left:821px;top:84px" width="15" height="15" viewBox="0 0 15 15"><path d="M1.500 1.500 13.500 13.500" stroke="#555" stroke-width="1" stroke-dasharray="3 1.200"/></svg>
<svg class="a" style="left:821px;top:106px" width="15" height="15" viewBox="0 0 15 15"><path d="M3.500 1V10.500" stroke="#2d62c0" stroke-width="1.600"/><path d="M3.500 10.500 13 13" stroke="#d03030" stroke-width="1.600"/><path d="M3.500 10.500 9 5.500" stroke="#3c9a4c" stroke-width="1.400"/></svg>
<svg class="a" style="left:851px;top:60px" width="14" height="17" viewBox="0 0 14 17"><defs><linearGradient id="gcyl" x1="0" x2="1"><stop offset="0" stop-color="#8ecf8e"/><stop offset=".55" stop-color="#6db56d"/><stop offset="1" stop-color="#4a944a"/></linearGradient></defs><path d="M1.500 3.500V13.500Q7 16.800 12.500 13.500V3.500Z" fill="url(#gcyl)" stroke="#2a6a2a" stroke-width=".9"/><ellipse cx="7" cy="3.500" rx="5.500" ry="2.400" fill="#b4e0b4" stroke="#2a6a2a" stroke-width=".9"/></svg>
<svg class="a" style="left:850px;top:83px" width="16" height="16" viewBox="0 0 16 16"><defs><radialGradient id="gsph" cx=".35" cy=".3" r=".8"><stop offset="0" stop-color="#c4ecc4"/><stop offset=".5" stop-color="#6eb86e"/><stop offset="1" stop-color="#3a8a3a"/></radialGradient></defs><circle cx="8" cy="8" r="6.800" fill="url(#gsph)" stroke="#1d5a2a" stroke-width=".8"/></svg>
<svg class="a" style="left:850px;top:106px" width="16" height="17" viewBox="0 0 16 17"><path d="M8 1 14.500 4V12L8 16 1.500 12V4Z" fill="#f4cf9c" stroke="#6a4a1a" stroke-width="1"/><path d="M5 5.500 8 7 11 5.500V10.500L8 12.500 5 10.500Z" fill="#70d040" stroke="#1d5a2a" stroke-width=".9"/><path d="M8 7V12.500" stroke="#1d5a2a" stroke-width=".8"/></svg>
<svg class="a" style="left:882px;top:61px" width="27" height="29" viewBox="0 0 27 29"><path d="M4.500 2H14L20 8V24H4.500Z" fill="#f0f2f6" stroke="#8a9ab8" stroke-width=".9"/><path d="M14 2V8H20" fill="#d8dde8" stroke="#8a9ab8" stroke-width=".9"/><path d="M1 6H5V2.500H9V6H13V10H9V14H5V10H1Z" fill="#5fbf8a" stroke="#2a7a5a" stroke-width="1"/><path d="M6 7H8V5H6V7H4V9H6" fill="none" stroke="#a8e4c4" stroke-width=".6"/><path d="M8 19 16 14.500 26 18.500V23L18 27.500 8 23.500Z" fill="#f6d2a4" stroke="#8a5a2a" stroke-width=".9"/><path d="M8 19 18 23 26 18.500M18 23V27.500" fill="none" stroke="#8a5a2a" stroke-width=".9"/></svg>
<div class="t c" style="left:876px;top:95px;width:36px;overflow:hidden">ﾌｧｲﾙ</div>
<svg class="a" style="left:936px;top:62px" width="25" height="28" viewBox="0 0 25 28"><rect x="8" y="1.500" width="15" height="15" fill="none" stroke="#1a1a1a" stroke-width="2"/><rect x="9" y="6" width="8" height="8" fill="#e8e8e8" stroke="#8a8a8a" stroke-width="1.300"/><path d="M8 6H2V16.500H8" fill="none" stroke="#1a1a1a" stroke-width="2"/><path d="M7 16.500V20M17 16.500V20" stroke="#1a1a1a" stroke-width="1.800"/><circle cx="7" cy="23" r="2.600" fill="#fff" stroke="#1a1a1a" stroke-width="1.600"/><circle cx="17" cy="23" r="2.600" fill="#d81818" stroke="#1a1a1a" stroke-width="1.600"/></svg>
<div class="t c" style="left:918px;top:95px;width:60px;overflow:hidden">PCB をｲﾝ</div>
<div class="t c" style="left:928px;top:108px;width:40px;overflow:hidden">ﾎﾟｰﾄ</div>
<svg class="a" style="left:1019px;top:59px" width="32" height="32" viewBox="0 0 32 32"><rect width="32" height="32" rx="4" fill="#fff"/><text x="16.500" y="23.500" text-anchor="middle" font-family="Liberation Sans" font-weight="bold" font-size="21" fill="#7a0c0c" stroke="#7a0c0c" stroke-width="2.200" letter-spacing="-1.500">3D</text><text x="15.500" y="22.500" text-anchor="middle" font-family="Liberation Sans" font-weight="bold" font-size="21" fill="#e02020" stroke="#e02020" stroke-width="1.200" letter-spacing="-1.500">3D</text></svg>
<div class="t c" style="left:984px;top:95px;width:104px;overflow:hidden">3Dﾓﾃﾞﾙのﾀﾞｳﾝﾛｰﾄﾞ</div>
<div class="t c gl" style="left:938px;width:32px;overflow:hidden">挿入</div>
<div class="a" style="left:1105px;top:61px;width:32px;height:32px;border-radius:3px;background:linear-gradient(#fbfbfb 0,#f1f1f1 70%,#dcdcdc 72%,#dedede 100%);box-shadow:0 0 0 1px #e4e4e4"></div>
<svg class="a" style="left:1113px;top:65px" width="16" height="16" viewBox="0 0 16 16"><circle cx="8" cy="8" r="7.500" fill="#2a6ad8"/><path d="M8 1A7 7 0 0 1 15 8H1A7 7 0 0 1 8 1Z" fill="#4f8cf0"/><path d="M5.800 3.500H10.200V7.500H13L8 12.800 3 7.500H5.800Z" fill="#fff"/></svg>
<div class="t c" style="left:1105px;top:99px;width:32px;overflow:hidden;font-size:12.5px">出力</div><div class="dd" style="left:1118px;top:120px"></div>
<div class="a" style="left:1158px;top:61px;width:32px;height:32px;border-radius:3px;background:linear-gradient(#fbfbfb 0,#f1f1f1 70%,#dcdcdc 72%,#dedede 100%);box-shadow:0 0 0 1px #e4e4e4"></div>
<svg class="a" style="left:1166px;top:65px" width="16" height="16" viewBox="0 0 16 16"><circle cx="8" cy="8" r="7.500" fill="#2a6ad8"/><path d="M8 1A7 7 0 0 1 15 8H1A7 7 0 0 1 8 1Z" fill="#4f8cf0"/><path d="M5.800 3.500H10.200V7.500H13L8 12.800 3 7.500H5.800Z" fill="#fff"/></svg>
<div class="t c" style="left:1158px;top:99px;width:32px;overflow:hidden;font-size:12.5px">調査</div><div class="dd" style="left:1171px;top:120px"></div>
<div class="a" style="left:1211px;top:61px;width:32px;height:32px;border-radius:3px;background:linear-gradient(#fbfbfb 0,#f1f1f1 70%,#dcdcdc 72%,#dedede 100%);box-shadow:0 0 0 1px #e4e4e4"></div>
<svg class="a" style="left:1219px;top:65px" width="16" height="16" viewBox="0 0 16 16"><circle cx="8" cy="8" r="7.500" fill="#2a6ad8"/><path d="M8 1A7 7 0 0 1 15 8H1A7 7 0 0 1 8 1Z" fill="#4f8cf0"/><path d="M5.800 3.500H10.200V7.500H13L8 12.800 3 7.500H5.800Z" fill="#fff"/></svg>
<div class="t c" style="left:1211px;top:99px;width:32px;overflow:hidden;font-size:12.5px">注文</div><div class="dd" style="left:1224px;top:120px"></div>
<!--RIBBON-CONTENT-->
<!-- LEFT PANELS -->
<!-- STRUCTURE -->
<div class="a ph" style="top:146px"><div class="t" style="width:60px;overflow:hidden">ｽﾄﾗｸﾁｬｰ</div><svg class="pin" viewBox="0 0 7 10"><path d="M1.500 .5H5.500M2 .5V5.500M5 .5V5.500M4 .5V5.500M.5 5.500H6.500M3.500 5.500V9.500" stroke="#8a8a8a" stroke-width="1" fill="none"/></svg></div>
<svg class="a" style="left:11px;top:172px" width="9" height="9" viewBox="0 0 9 9"><path d="M8 1V8H1Z" fill="#7a7a7a" stroke="#555" stroke-width=".8"/></svg>
<div class="a" style="left:25px;top:171px;width:13px;height:13px;background:#fff;border:1px solid #b8b8b8"></div><svg class="a" style="left:25px;top:171px" width="13" height="13" viewBox="0 0 13 13"><path d="M3 6.500 5.500 9 10 3.800" fill="none" stroke="#b0b0b0" stroke-width="1.300"/></svg>
<svg class="a" style="left:41px;top:168px" width="17" height="18" viewBox="0 0 17 18"><path d="M1.500 1H9L13 5V16H1.500Z" fill="#fafbff" stroke="#6a7a9a" stroke-width=".9"/><path d="M9 1V5H13" fill="#dfe4f0" stroke="#6a7a9a" stroke-width=".9"/><path d="M3 12 9 9 16 11.500V14.500L10 17.500 3 15Z" fill="#f2c48e" stroke="#6a4a2a" stroke-width=".8"/><path d="M3 12 10 14.500 16 11.500M10 14.500V17.500" fill="none" stroke="#6a4a2a" stroke-width=".8"/></svg>
<div class="t" style="left:63px;top:170px;font-weight:bold;font-size:12.5px">test1*</div>
<div class="a" style="left:44px;top:187px;width:13px;height:13px;background:#fff;border:1px solid #8a8a8a"></div><svg class="a" style="left:44px;top:187px" width="13" height="13" viewBox="0 0 13 13"><path d="M3 6.500 5.500 9 10 3.800" fill="none" stroke="#222" stroke-width="1.300"/></svg><svg class="a" style="left:61px;top:186px" width="13" height="15" viewBox="0 0 13 15"><path d="M1 3.500 6.500 1 12 3.500V11.500L6.500 14 1 11.500Z" fill="#7fdc86" stroke="#124a1c" stroke-width="1.200"/><path d="M1 3.500 6.500 5.500 12 3.500 6.500 1.200Z" fill="#d2f6d4" stroke="#124a1c" stroke-width=".8"/><path d="M6.500 5.500V14" stroke="#124a1c" stroke-width=".9"/><path d="M7 6 11.500 4.200V11.200L7 13.300Z" fill="#3fae4a"/></svg>
<div class="a" style="left:80px;top:185px;width:28px;height:16px;background:#ffd972"></div>
<div class="t" style="left:82px;top:186px;font-size:11.5px;color:#1a1a1a">Solid</div>
<div class="a" style="left:44px;top:203px;width:13px;height:13px;background:#fff;border:1px solid #8a8a8a"></div><svg class="a" style="left:44px;top:203px" width="13" height="13" viewBox="0 0 13 13"><path d="M3 6.500 5.500 9 10 3.800" fill="none" stroke="#222" stroke-width="1.300"/></svg><svg class="a" style="left:61px;top:202px" width="13" height="15" viewBox="0 0 13 15"><path d="M1 3.500 6.500 1 12 3.500V11.500L6.500 14 1 11.500Z" fill="#7fdc86" stroke="#124a1c" stroke-width="1.200"/><path d="M1 3.500 6.500 5.500 12 3.500 6.500 1.200Z" fill="#d2f6d4" stroke="#124a1c" stroke-width=".8"/><path d="M6.500 5.500V14" stroke="#124a1c" stroke-width=".9"/><path d="M7 6 11.500 4.200V11.200L7 13.300Z" fill="#3fae4a"/></svg>
<div class="a" style="left:80px;top:201px;width:28px;height:16px;background:#ffc95c"></div>
<div class="t" style="left:82px;top:202px;font-size:11.5px;color:#1a1a1a">Solid</div>
<svg class="a" style="left:31px;top:220px" width="7" height="11" viewBox="0 0 7 11"><path d="M1 1 6 5.500 1 10Z" fill="#fff" stroke="#555" stroke-width="1"/></svg>
<div class="a" style="left:44px;top:219px;width:13px;height:13px;background:#fff;border:1px solid #b8b8b8"></div>
<svg class="a" style="left:60px;top:218px" width="15" height="14" viewBox="0 0 15 14"><path d="M1 3Q1 1.500 2.500 1.500H6L7.500 3H12Q13 3 13 4V12.500H1Z" fill="#efe3b8" stroke="#d5c690" stroke-width=".8"/><path d="M2.500 5.500H14L12.500 12.500H1Z" fill="#f7efd2" stroke="#d5c690" stroke-width=".8"/></svg>
<div class="t" style="left:82px;top:218px;font-style:italic;width:30px;overflow:hidden">ｶｰﾌﾞ</div>
<!-- PROPERTIES -->
<div class="a ph" style="top:393px;height:19px"><div class="t" style="width:52px;overflow:hidden;top:2px">ﾌﾟﾛﾊﾟﾃｨ</div><svg class="pin" viewBox="0 0 7 10"><path d="M1.500 .5H5.500M2 .5V5.500M5 .5V5.500M4 .5V5.500M.5 5.500H6.500M3.500 5.500V9.500" stroke="#8a8a8a" stroke-width="1" fill="none"/></svg></div>
<div class="a" style="left:2px;top:413px;width:236px;height:199px;border:1px solid #a5a5a5;background:#fff"></div>
<div class="a" style="left:3px;top:414px;width:234px;height:129px;background:#e2e2e7"></div>
<svg class="a" style="left:8px;top:419px" width="9" height="6" viewBox="0 0 9 6"><path d="M1 1 4.500 4.500 8 1" fill="none" stroke="#333" stroke-width="1.400"/></svg><div class="t" style="left:27px;top:415px;font-weight:bold;width:80px;overflow:hidden"><span style="display:inline-block;transform:scaleX(.82);transform-origin:0 50%;margin-right:-11px">マテリアル</span></div>
<div class="a" style="left:24px;top:431px;width:80px;height:15px;background:#fff"></div><div class="a" style="left:105px;top:431px;width:132px;height:15px;background:#fff"></div><svg class="a" style="left:8px;top:435px" width="9" height="6" viewBox="0 0 9 6"><path d="M1 1 4.500 4.500 8 1" fill="none" stroke="#333" stroke-width="1.400"/></svg><div class="t" style="left:27px;top:431px;color:#111;width:77px;overflow:hidden"><span style="display:inline-block;transform:scaleX(.82);transform-origin:0 50%;margin-right:-11px">マテリアル</span>名</div><div class="t" style="left:108px;top:431px;color:#111;width:128px;overflow:hidden">不明な材質</div>
<div class="a" style="left:24px;top:447px;width:80px;height:15px;background:#fff"></div><div class="a" style="left:105px;top:447px;width:132px;height:15px;background:#fff"></div><div class="t" style="left:48px;top:447px;color:#8c8c8c;width:56px;overflow:hidden">流体</div><div class="t" style="left:108px;top:447px;color:#8c8c8c;width:128px;overflow:hidden;font-size:11px">False</div>
<div class="a" style="left:24px;top:463px;width:80px;height:15px;background:#fff"></div><div class="a" style="left:105px;top:463px;width:132px;height:15px;background:#fff"></div><div class="t" style="left:48px;top:463px;color:#8c8c8c;width:56px;overflow:hidden">密度</div><div class="t" style="left:108px;top:463px;color:#8c8c8c;width:128px;overflow:hidden">なし</div>
<svg class="a" style="left:8px;top:483px" width="9" height="6" viewBox="0 0 9 6"><path d="M1 1 4.500 4.500 8 1" fill="none" stroke="#333" stroke-width="1.400"/></svg><div class="t" style="left:27px;top:479px;font-weight:bold;width:80px;overflow:hidden">表示</div>
<div class="a" style="left:24px;top:495px;width:80px;height:15px;background:#fff"></div><div class="a" style="left:105px;top:495px;width:132px;height:15px;background:#fff"></div><div class="t" style="left:27px;top:495px;color:#111;width:77px;overflow:hidden;font-size:11px;letter-spacing:-.2px">Tessellation Qua</div><div class="t" style="left:108px;top:495px;color:#111;width:128px;overflow:hidden">5</div>
<div class="a" style="left:24px;top:511px;width:80px;height:15px;background:#fff"></div><div class="a" style="left:105px;top:511px;width:132px;height:15px;background:#fff"></div><div class="t" style="left:27px;top:511px;color:#111;width:77px;overflow:hidden">ｽﾀｲﾙ</div><div class="t" style="left:108px;top:511px;color:#111;width:128px;overflow:hidden">色別, ｽﾀｲﾙ別</div>
<div class="a" style="left:24px;top:527px;width:80px;height:15px;background:#fff"></div><div class="a" style="left:105px;top:527px;width:132px;height:15px;background:#fff"></div><div class="t" style="left:27px;top:527px;color:#8c8c8c;width:77px;overflow:hidden">色</div><div class="a" style="left:107px;top:528px;width:20px;height:12px;background:#ff8000;border:1px solid #111"></div><div class="t" style="left:135px;top:527px;color:#8c8c8c;width:102px;overflow:hidden;font-size:11px">ARGB: 255, 255, 128, 0</div>
<div class="a" style="left:3px;top:612px;width:234px;height:23px;background:#f5f5fa"></div>
<div class="a" style="left:6px;top:612px;width:53px;height:21px;background:#f0f0f0;border-left:1px solid #4a6a90;border-right:1px solid #4a6a90"></div>
<div class="t" style="left:11px;top:615px;color:#2c5b87;width:44px;overflow:hidden">ﾌﾟﾛﾊﾟﾃｨ</div>
<div class="t" style="left:65px;top:615px;width:24px;overflow:hidden">ﾚｲﾔ</div>
<!-- OPTIONS -->
<div class="a ph" style="top:640px;height:19px"><div class="t" style="width:80px;overflow:hidden;top:2px">ｵﾌﾟｼｮﾝ - 移動</div><svg class="pin" viewBox="0 0 7 10"><path d="M1.500 .5H5.500M2 .5V5.500M5 .5V5.500M4 .5V5.500M.5 5.500H6.500M3.500 5.500V9.500" stroke="#8a8a8a" stroke-width="1" fill="none"/></svg></div>
<div class="a" style="left:3px;top:661px;width:234px;height:24px;background:#f5f5fa"></div>
<svg class="a" style="left:6px;top:664px" width="17" height="17" viewBox="0 0 17 17"><path d="M13.93 7.15 16.01 7.31 16.01 9.69 13.93 9.85 13.30 11.38 14.65 12.97 12.97 14.65 11.38 13.30 9.85 13.93 9.69 16.01 7.31 16.01 7.15 13.93 5.62 13.30 4.03 14.65 2.35 12.97 3.70 11.38 3.07 9.85 0.99 9.69 0.99 7.31 3.07 7.15 3.70 5.62 2.35 4.03 4.03 2.35 5.62 3.70 7.15 3.07 7.31 0.99 9.69 0.99 9.85 3.07 11.38 3.70 12.97 2.35 14.65 4.03 13.30 5.62Z" fill="#fafafc" stroke="#3c3c3c" stroke-width="1.300" stroke-linejoin="round"/><circle cx="8.500" cy="8.500" r="2.700" fill="#f5f5fa" stroke="#3c3c3c" stroke-width="1.300"/></svg>
<div class="t" style="left:29px;top:666px;width:26px;overflow:hidden;color:#333">一般</div>
<svg class="a" style="left:12px;top:695px" width="16" height="16" viewBox="0 0 16 16"><path d="M1 14 5 8H15L10.500 14Z" fill="#f4f4f4" stroke="#9a9a9a" stroke-width=".9"/><path d="M4 13 8 2 11 9" fill="none" stroke="#8a8a8a" stroke-width="1.200"/><path d="M6.500 8H10" stroke="#8a8a8a"/></svg>
<svg class="a" style="left:36px;top:695px" width="16" height="16" viewBox="0 0 16 16"><path d="M2 2 13.500 12.500" stroke="#555" stroke-width="1.100"/><path d="M1 15 3 9.500 4.800 11.300 10.700 5.400 9 3.600 15 1 13 7 11.300 5.300 5.300 11.300 7 13Z" fill="#a8d4f4" stroke="#3a6a96" stroke-width=".8"/></svg>
<svg class="a" style="left:69px;top:695px" width="17" height="16" viewBox="0 0 17 16"><path d="M3 2V14M6.500 2V14M10 2V14" stroke="#333" stroke-width="1.600"/><path d="M1 4Q6.500 0 12 4" fill="none" stroke="#333" stroke-width="1.200"/><circle cx="12.500" cy="5" r="2.800" fill="#c8d4f0" stroke="#8a6a8a" stroke-width=".9"/><path d="M14 3H16.500" stroke="#555"/></svg>
<svg class="a" style="left:94px;top:695px" width="16" height="16" viewBox="0 0 16 16"><path d="M2 1.500H14V3.500H2Z" fill="#555"/><circle cx="8" cy="9.500" r="5.300" fill="#c4c8f0" stroke="#444" stroke-width="1.200"/><path d="M8 9.500 11 6" stroke="#d04040" stroke-width="1.200"/></svg>
<svg class="a" style="left:118px;top:695px" width="17" height="16" viewBox="0 0 17 16"><path d="M1.500 6V15M15.500 6V15" stroke="#333" stroke-width="1.200"/><path d="M2 12H15M2 12 4.500 10.500V13.500ZM15 12 12.500 10.500V13.500Z" stroke="#333" stroke-width="1" fill="#333"/><path d="M4 1.500 7 6.500M7 1.500 4 6.500M10 1.500 13 6.500M13 1.500 10 6.500" stroke="#333" stroke-width="1.100"/></svg>
<div class="a" style="left:141px;top:697px;width:16px;height:11px;border:1px solid #5a5a2a;background:#f4f2dc;font-size:7.500px;font-weight:bold;line-height:9px;text-align:center;color:#3a3a1a;letter-spacing:-.3px;overflow:hidden">XYZ</div>
<div class="a" style="left:12px;top:719px;width:12px;height:12px;background:#fff;border:1px solid #9a9a9a"></div><div class="t" style="left:31px;top:718px;font-size:10.2px;color:#222;width:64px;overflow:hidden">ﾊﾟﾀｰﾝを作成</div>
<div class="a" style="left:12px;top:740px;width:12px;height:12px;background:#fff;border:1px solid #9a9a9a"></div><div class="t" style="left:31px;top:739px;font-size:10.2px;color:#222;width:58px;overflow:hidden">方向を維持</div>
<div class="a" style="left:12px;top:760px;width:12px;height:12px;background:#fff;border:1px solid #9a9a9a"></div><div class="t" style="left:31px;top:759px;font-size:10.2px;color:#222;width:58px;overflow:hidden">最初に分離</div>
<div class="a" style="left:12px;top:780px;width:12px;height:12px;background:#2c5b87;border:1px solid #2c5b87"></div><svg class="a" style="left:12px;top:780px" width="12" height="12" viewBox="0 0 12 12"><path d="M2.500 6 5 8.500 9.500 3.200" fill="none" stroke="#fff" stroke-width="1.500"/></svg><div class="t" style="left:31px;top:779px;font-size:10.2px;color:#222;width:90px;overflow:hidden">ｽｹｯﾁの接続を保持</div>
<div class="t" style="left:12px;top:802px;color:#8c8c8c;width:54px;overflow:hidden;font-size:10px">向きを記憶</div>
<svg class="a" style="left:70px;top:800px" width="14" height="15" viewBox="0 0 14 15"><path d="M3 1V11" stroke="#2d62c0" stroke-width="1.600"/><path d="M3 11 13 13.500" stroke="#d03030" stroke-width="1.600"/><path d="M3 11 8.500 6" stroke="#3c9a4c" stroke-width="1.400"/></svg>
<div class="t" style="left:89px;top:802px;font-size:10.5px;width:42px;overflow:hidden;color:#222">ﾃﾞｨﾌｫﾙﾄ</div><div class="dd" style="left:132px;top:807px"></div>
<!-- bottom tabs -->
<div class="a" style="left:0;top:960px;width:238px;height:25px;background:#f5f5fa"></div>
<div class="a" style="left:6px;top:960px;width:84px;height:22px;background:#f0f0f0;border-left:1px solid #4a6a90;border-right:1px solid #4a6a90"></div>
<div class="t" style="left:11px;top:963px;color:#2c5b87;width:76px;overflow:hidden">ｵﾌﾟｼｮﾝ - 移動</div>
<div class="t" style="left:95px;top:963px;width:28px;overflow:hidden">選択</div>

<!-- VIEWPORT -->
<div class="a" style="left:244px;top:149px;width:988px;height:809px;border:1px solid #a9a58c;background:#fff;box-shadow:inset 1px 1px 0 #f0eedd"></div>
<div class="t" style="left:256px;top:157px;font-size:14px;line-height:18px;height:18px;color:#5a5a5a;width:640px;overflow:hidden;transform:scaleX(.94);transform-origin:0 50%">基準をｸﾘｯｸし、選択されたﾊﾝﾄﾞﾙを回転してその基準に揃えます。選択したｵﾌﾞｼﾞｪｸﾄは回転します。</div>
<div class="a" style="left:261px;top:181px;width:32px;height:32px;border:1px solid #808080;border-radius:6px;background:linear-gradient(#ffffff,#f8f8f8)"><svg width="30" height="30" viewBox="0 0 30 30"><path d="M10 6 22 16 16 17 19.500 23.500 17 25 13.500 18 10 21.500Z" fill="#6a6a6a" stroke="#222" stroke-width=".9"/></svg></div>
<div class="a" style="left:324px;top:181px;width:32px;height:32px;border:1px solid #808080;border-radius:6px;background:linear-gradient(#ffffff,#f8f8f8)"><svg width="30" height="30" viewBox="0 0 30 30"><path d="M4 27 19 11 16.500 8.500 27 3 22 14 19.500 11.500 5 28Z" fill="#8ec5ea" stroke="#234a6a" stroke-width=".9"/></svg></div>
<div class="a" style="left:387px;top:181px;width:32px;height:32px;border:1px solid #808080;border-radius:6px;background:linear-gradient(#ffffff,#f8f8f8)"><svg width="30" height="30" viewBox="0 0 30 30"><path d="M2 27Q8 27 10 22Q12 17 18 17L20 13 17.500 11 27 4 24 16 21.500 14 19.500 19Q14 19 12 23.500Q9.500 29 2 29Z" fill="#8ec5ea" stroke="#234a6a" stroke-width=".9"/></svg></div>
<div class="a" style="left:450px;top:181px;width:32px;height:32px;border:1px solid #808080;border-radius:6px;background:linear-gradient(#ffffff,#f8f8f8)"><svg width="30" height="30" viewBox="0 0 30 30"><path d="M3 6 20 3 28 8V13L11 16 3 11Z" fill="#c98a5a" stroke="#5a3418" stroke-width=".8"/><path d="M3 6 11 11 28 8 20 3Z" fill="#e8b48a" stroke="#5a3418" stroke-width=".7"/><path d="M15 12 22 27H8Z" fill="#6fc8c0" stroke="#2a6a66" stroke-width=".8"/><path d="M15 12 22 27 17 27.500Z" fill="#4aa098"/></svg></div>
<div class="a" style="left:513px;top:181px;width:32px;height:32px;border:1px solid #808080;border-radius:6px;background:linear-gradient(#ffffff,#f8f8f8)"><svg width="30" height="30" viewBox="0 0 30 30"><path d="M15 14 22 11 28 13V23L21 26 15 24Z" fill="#d89866" stroke="#5a3418" stroke-width=".8"/><path d="M15 14 21 16.500 28 13M21 16.500V26" fill="none" stroke="#5a3418" stroke-width=".8"/><path d="M4 5 7 3 17 13 19.500 11 21 20 12 18 14.500 16Z" fill="#8ec5ea" stroke="#234a6a" stroke-width=".9"/><circle cx="21" cy="20" r="1.500" fill="#2a62c0"/></svg></div>
<div class="a" style="left:261px;top:221px;width:32px;height:32px;border:1px solid #808080;border-radius:6px;background:linear-gradient(#ffffff,#f8f8f8)"><svg width="30" height="30" viewBox="0 0 30 30"><path d="M13 15.500 20 12.500 26.500 15V24L19.500 27.500 13 24.500Z" fill="none" stroke="#e03030" stroke-width=".9"/><path d="M15 16.500 20.500 14.500 24.500 16V22.500L19.500 25 15 23Z" fill="#f0c4a4" stroke="#c85a4a" stroke-width=".8"/><path d="M15 16.500 19.500 18.500 24.500 16M19.500 18.500V25" fill="none" stroke="#c85a4a" stroke-width=".7"/><path d="M5 4 15 12.500 10.500 13 13 18 11 19 8.500 14 5.500 17Z" fill="#7a7a7a" stroke="#3a3a3a" stroke-width=".8"/></svg></div>
<div class="a" style="left:324px;top:221px;width:32px;height:32px;border:1px solid #808080;border-radius:6px;background:linear-gradient(#ffffff,#f8f8f8)"><svg width="30" height="30" viewBox="0 0 30 30"><path d="M8 21 11 11" stroke="#5aa06a" stroke-width="1.200"/><path d="M13 3 14 11.500 9 10Z" fill="#b4e8b8" stroke="#3a8a4a" stroke-width=".8"/><path d="M8 21 20 25" stroke="#c06060" stroke-width="1.200"/><path d="M27 28 18.500 27 20.500 22Z" fill="#f4b4b4" stroke="#b04040" stroke-width=".8"/><circle cx="7.500" cy="21" r="3.600" fill="#e8e83c" stroke="#a0a020" stroke-width=".9"/></svg></div>
<div class="a" style="left:387px;top:221px;width:32px;height:32px;border:1px solid #808080;border-radius:6px;background:linear-gradient(#ffffff,#f8f8f8)"><svg width="30" height="30" viewBox="0 0 30 30"><path d="M15 16V10" stroke="#4f88c0" stroke-width="1.600" stroke-dasharray="2.500 1.500"/><path d="M15 3 18 10.500H12Z" fill="#c8e6f8" stroke="#2d5f8a" stroke-width=".8"/><path d="M13 17.500 9 20.500M17 17.500 21 20.500" stroke="#4f88c0" stroke-width="1.600" stroke-dasharray="2.500 1.500"/><path d="M3 24.500 8 18.500 10.500 22.500Z" fill="#c8e6f8" stroke="#2d5f8a" stroke-width=".8"/><path d="M27 24.500 22 18.500 19.500 22.500Z" fill="#c8e6f8" stroke="#2d5f8a" stroke-width=".8"/></svg></div>
<div class="a" style="left:512px;top:224px;width:48px;height:47px;border:1px solid #808080;border-radius:9px;background:linear-gradient(#ffffff,#f8f8f8)"><svg width="46" height="45" viewBox="0 0 46 45"><path d="M18 7 35 3 39 17 22 21.500Z" fill="#e0905a" stroke="#8a5a30" stroke-width=".9"/><path d="M28.500 7.500V16.500M24 12H33M25.500 9 31.500 15M31.500 9 25.500 15" stroke="#3a7a3a" stroke-width="1"/><path d="M7 30.500 22 29.500 21 32 32.500 36.500 31 40.500 19.500 36 18 38.500Z" fill="#ece8d0" stroke="#c4c8a8" stroke-width=".8"/><path d="M33 41 29.500 24 26.500 25 29.500 13 36.500 22.500 33.500 23.500 37 40Z" fill="#a8b070" stroke="#4a5a2a" stroke-width="1"/></svg></div>
<svg class="a" style="left:245px;top:150px" width="986" height="807" viewBox="245 150 986 807">
<defs>
<clipPath id="cface"><path d="M600 309 775.800 359.100 775.800 593.100 717.400 576.600 731.100 638.900 644.400 613.700 657.800 559.900 599.800 542.600Z"/></clipPath>
</defs>
<!-- lower orange box -->
<path d="M616.500 540 616.500 778.700 662.400 877.400 860 854.900 859.700 562 846 532.600 780 520 700 520Z" fill="#fd7508"/>
<path d="M616.500 545V778.700L662.400 877.400 860 854.900V562L846 532.600" fill="none" stroke="#7a3a04" stroke-width=".9"/>
<path d="M662.600 584V877.400M662.700 583.800 859.700 562" fill="none" stroke="#5a2c04" stroke-width=".8"/>
<!-- peach (inner faces seen through) -->
<path d="M727.600 580.300 775.800 593.100 794.900 576.800 803.700 601.400 800.800 629.900 731.100 638.900 717.400 576.600Z" fill="#eaaa7d"/>
<path d="M803.700 601.400 810.600 625.500 800.800 629.900Z" fill="#d9986a"/>
<path d="M718.700 578 727.600 580.300 723.300 596Z" fill="#fd8a10"/>
<path d="M628.300 552.800 640.100 556.300 648 576 625.400 579Z" fill="#eaaa7d"/>
<path d="M731.100 638.900 800.800 629.900 810.600 625.500 794.900 576.800" fill="none" stroke="#6a3a10" stroke-width=".8"/>
<path d="M723 607 800.800 629.900M731.500 637 800 628" fill="none" stroke="#b0907a" stroke-width=".7"/>
<path d="M625.400 579 644.400 609.400M625.400 579 628.300 552.800M626 570 648 576" fill="none" stroke="#7a4a20" stroke-width=".7"/>
<!-- upper box -->
<path d="M600 309 701.800 219.800 876.600 271 775.800 359.100Z" fill="#d2d2d2" stroke="#3a3a3a" stroke-width=".9" stroke-linejoin="round"/>
<path d="M775.800 359.100 876.600 271 877 506 775.800 593.100Z" fill="#9c9c9c" stroke="#4a4a4a" stroke-width=".9" stroke-linejoin="round"/>
<path d="M775.800 467.700 814.500 463.400 829.300 495.600 827.700 523.100 845 528.600 846 532.600 775.800 593.100Z" fill="#c58b5c"/>
<path d="M775.800 467.700 814.500 463.400 829.300 495.600 827.700 523.100M775.800 480.500 829.300 495.600M775.800 508 845 528.600M775.800 565 794.900 569.900 809.600 564" fill="none" stroke="#9a7a5c" stroke-width=".8"/>
<!-- yellow front face -->
<g clip-path="url(#cface)">
<rect x="590" y="300" width="200" height="350" fill="#ead658"/>
<path d="M616.500 486.500 682.400 478.700 757.500 501.500 748.700 470.600 775.800 467.700V650H616.500Z" fill="#f2c231"/>
<path d="M657.800 559.900 717.400 576.600 731.100 638.900 644.400 613.700Z" fill="#fc9a08"/>
<path d="M717.400 576.600 712.800 636 731.100 638.900Z" fill="#f2c231"/>
<path d="M616.500 486.500 682.400 478.700 757.500 501.500 748.700 470.600 775.800 467.700M616.500 486.500V548M616.500 486.500 631.300 519 629.300 548.500M631.300 519 750 556.300 775.800 564M748.700 470.600 775.800 479.100M757.500 501.500 775.800 507" fill="none" stroke="#c9a326" stroke-width=".8"/>
<path d="M647 552.400 647 578 651 617M650 558.300 662.700 583.800 717.400 578M662.700 583.800V640M717.400 576.600 712.800 636 731.100 638.900M647 553 717 575" fill="none" stroke="#8a5a08" stroke-width=".8"/>
</g>
<path d="M650.500 615.500 644.400 613.700 657.800 559.900 599.800 542.600 600 309 775.800 359.100 775.800 593.100 717.400 576.600 731.100 638.900 713 633.600" fill="none" stroke="#141000" stroke-width="2" stroke-linejoin="miter"/><path d="M650.500 615.500 713 633.600" fill="none" stroke="#2a1a00" stroke-width=".9"/>
<!-- faint guide line -->
<path d="M743.300 681 797.700 800.500" stroke="#ff9a50" stroke-width="2.300" fill="none"/>
<!-- arcs -->
<path d="M755.700 668.300Q706.850 677.350 702.200 719.400" fill="none" stroke="#caa0a6" stroke-width="4.200" stroke-linecap="round"/>
<path d="M702.200 728.800Q726.150 752.350 767.500 750.900" fill="none" stroke="#a9a6d6" stroke-width="4.200" stroke-linecap="round"/>
<path d="M762.800 669.800Q775.300 699.450 775.400 746.100" fill="none" stroke="#a4d4a4" stroke-width="4.200" stroke-linecap="round"/>
<circle cx="751.500" cy="669.200" r="2.700" fill="#bc98a4"/><circle cx="702.800" cy="715.500" r="2.700" fill="#bc98a4"/><circle cx="704.500" cy="731.500" r="2.700" fill="#9c98cc"/><circle cx="764.500" cy="750.800" r="2.700" fill="#9c98cc"/><circle cx="763.800" cy="672.500" r="2.700" fill="#94c898"/><circle cx="775.200" cy="741" r="2.700" fill="#94c898"/>
<!-- up arrow (blue-gray) -->
<path d="M758.600 720V656H764.200V720Z" fill="#9c98c8"/><path d="M758.600 720V656H760.500V720Z" fill="#b8b4dc"/>
<path d="M761.400 632.500 766.800 652 766 657H756.800L756 652Z" fill="#a9a6d6" stroke="#8a86b8" stroke-width=".5"/>
<!-- left arrow (green-gray) -->
<path d="M761 718.200 690 724.500V730.500L761 723.800Z" fill="#a4cca0"/><path d="M761 718.200 690 724.500V726.200L761 720Z" fill="#c4e4c0"/>
<path d="M662.400 731.500 688 723 691 724V733L688 734.500Z" fill="#a8d0a4" stroke="#88b088" stroke-width=".5"/>
<!-- hub -->
<path d="M752 716 758 711.500 768 712.500 771 720 767 728.500 756 729Z" fill="#2a2ac8"/>
<!-- red arrow -->
<path d="M758.500 722 765 719.500 776 747 770 750Z" fill="#f03030"/>
<path d="M771.200 749.200 777.300 747.400 784.400 758 783.100 769.100 772.500 758Z" fill="#f02a2a" stroke="#d81818" stroke-width=".5"/>
<circle cx="761" cy="720" r="3.300" fill="#fff4b0" stroke="#b8a050" stroke-width=".7"/>
<!-- value box -->
<path d="M775.200 703.500 779.500 707.500 780.500 717" fill="none" stroke="#111" stroke-width="1.400"/><path d="M775 703 780 705.500 776.500 708Z" fill="#111"/>
<rect x="782" y="709.400" width="11.800" height="20.200" fill="#fff" stroke="#d8c8a8" stroke-width=".6"/><rect x="783.600" y="712" width="8.600" height="15.600" fill="#0a64c8"/>
<text x="787.900" y="724.500" text-anchor="middle" font-family="Liberation Sans" font-size="12" fill="#fff">0</text>
<!-- world axes -->
<path d="M738 817.200V786" stroke="#b07a66" stroke-width="2"/><path d="M738 775 741 790H735Z" fill="#4f7ef0"/>
<path d="M738 817.200 754 803" stroke="#5a8a10" stroke-width="1.800"/><path d="M762.500 796 757.500 805.500 752 799.500Z" fill="#2a8a18"/>
<path d="M738 817.200 764 825" stroke="#f04020" stroke-width="1.600"/><path d="M781 829 763 828.500 765 821.500Z" fill="#f02020"/>
<circle cx="738" cy="817.200" r="2" fill="#9a8a7a"/>
<text x="738.500" y="769.500" text-anchor="middle" font-family="Liberation Sans" font-weight="bold" font-size="11.500" fill="#7a4a7a">Z</text>
<text x="768.500" y="795" text-anchor="middle" font-family="Liberation Sans" font-weight="bold" font-size="10.500" fill="#6a9a18">Y</text>
<text x="790.500" y="836.500" text-anchor="middle" font-family="Liberation Sans" font-weight="bold" font-size="10.500" fill="#f03018">X</text>
<!-- corner gizmo -->
<path d="M289.500 891.300 300.500 884.200 316.500 888.200 307.200 896.200Z" fill="#e4effa" stroke="#a8b8d0" stroke-width=".7"/>
<path d="M289.500 891.300 307.200 896.200 307.200 913.900 290.400 908.100Z" fill="#dce9f8" stroke="#a8b8d0" stroke-width=".7"/>
<path d="M307.200 896.200 316.500 888.200 316 903.700 307.200 913.900Z" fill="#b8c6e0" stroke="#98a8c8" stroke-width=".7"/>
<ellipse cx="303.400" cy="888.800" rx="3.800" ry="3" fill="#0a0af0"/><circle cx="298.100" cy="903" r="3.900" fill="#12a020"/><ellipse cx="312.900" cy="901" rx="3" ry="3.900" fill="#f01818"/>
<path d="M303.400 882.500V872" stroke="#0a0af0" stroke-width="1.400"/><path d="M303.400 866 306.300 877.500H300.500Z" fill="#0a0af0"/>
<path d="M319 902.800 326 904.800" stroke="#f01818" stroke-width="1.400"/><path d="M335 907.500 323.500 907.800 325.500 901.500Z" fill="#f01818"/>
<text x="303.400" y="862.300" text-anchor="middle" font-family="Liberation Sans" font-weight="bold" font-size="11.500" fill="#1818e8">Z</text>
<text x="318.400" y="889.500" text-anchor="middle" font-family="Liberation Sans" font-weight="bold" font-size="10.500" fill="#1a7a28">Y</text>
<text x="342.600" y="914" text-anchor="middle" font-family="Liberation Sans" font-weight="bold" font-size="10.500" fill="#f01818">X</text>

</svg>

<svg class="a" style="left:668px;top:439px" width="13" height="19" viewBox="0 0 13 19"><path d="M1.500 1.500V15L5 11.800 7.300 17 9.300 16 7 11H11.500Z" fill="#fff" stroke="#000" stroke-width="1"/></svg>
<svg class="a" style="left:681px;top:448px" width="17" height="23" viewBox="0 0 17 23"><path d="M4 3 11.500 1.500 13 8 5.500 9.500Z" fill="#d8a078" stroke="#9a8aa8" stroke-width=".8"/><path d="M1 16 8 14 13 17.500 6 19Z" fill="#f0f0d0" stroke="#b8c8a0" stroke-width=".6"/><path d="M8.500 6 11 14 12.500 21 10.500 21 9.500 14Z" fill="#8ad0d8" stroke="#5a9ab0" stroke-width=".6"/></svg>
<!-- scale bar -->
<div class="a" style="left:1151px;top:928px;width:68px;height:2px;background:#3a3ad0"></div>
<div class="t" style="left:1171px;top:932px;color:#3a3ad0;font-size:11px">20mm</div>
<!-- doc tab strip -->
<div class="a" style="left:242px;top:960px;width:994px;height:25px;background:#f5f5fa"></div>
<div class="a" style="left:242px;top:959px;width:994px;height:1px;background:#9a9a9a"></div>
<div class="a" style="left:245px;top:959px;width:72px;height:23px;background:#f5f5fa;border:1px solid #4a6a90;border-top:none"></div>
<svg class="a" style="left:249px;top:962px" width="16" height="17" viewBox="0 0 17 18"><path d="M1.500 1H9L13 5V16H1.500Z" fill="#fafbff" stroke="#6a7a9a" stroke-width=".9"/><path d="M9 1V5H13" fill="#dfe4f0" stroke="#6a7a9a" stroke-width=".9"/><path d="M3 12 9 9 16 11.500V14.500L10 17.500 3 15Z" fill="#f2c48e" stroke="#6a4a2a" stroke-width=".8"/><path d="M3 12 10 14.500 16 11.500M10 14.500V17.500" fill="none" stroke="#6a4a2a" stroke-width=".8"/></svg>
<div class="t" style="left:268px;top:964px;font-weight:bold;font-size:12.500px;color:#2c5b87">test1*</div>
<svg class="a" style="left:304px;top:967px" width="8" height="8" viewBox="0 0 8 8"><path d="M1 1 7 7M7 1 1 7" stroke="#555" stroke-width="1.500"/></svg>
<svg class="a" style="left:1195px;top:966px" width="38" height="10" viewBox="0 0 38 10"><path d="M6 1 2 5 6 9Z" fill="none" stroke="#333" stroke-width="1"/><path d="M16 1 20 5 16 9Z" fill="none" stroke="#333" stroke-width="1"/><path d="M28.500 1.500 35.500 8.500M35.500 1.500 28.500 8.500" stroke="#333" stroke-width="1.500"/></svg>
<!-- right dock -->
<div class="a" style="left:1236px;top:146px;width:28px;height:839px;background:#efefef"></div>
<div class="a" style="left:1237px;top:149px;width:24px;height:25px;background:#f5f5fa"></div>
<div class="a" style="left:1256px;top:149px;width:6px;height:61px;background:#c6c6c6"></div>
<div class="t" style="left:1257px;top:154px;width:58px;height:14px;line-height:14px;font-size:12px;overflow:hidden;transform:rotate(90deg);transform-origin:0 0">ｸｲｯｸｶﾞｲﾄﾞ</div>

<!-- STATUS -->
<div id="status" class="a">
<div class="t" style="left:9px;top:10px;font-size:11px;width:505px;overflow:hidden;transform:scaleX(.855);transform-origin:0 50%">基準をｸﾘｯｸし、選択されたﾊﾝﾄﾞﾙを回転してその基準に揃えます。選択したｵﾌﾞｼﾞｪｸﾄは回転します。</div>
<div class="ssep" style="left:524px"></div><div class="ssep" style="left:674px"></div><div class="ssep" style="left:738px"></div><div class="ssep" style="left:838px"></div><div class="ssep" style="left:1100px"></div>
<svg class="a" style="left:707px;top:9px" width="15" height="15" viewBox="0 0 15 15"><circle cx="7.500" cy="7.500" r="6.800" fill="#e03030" stroke="#f5b0b0" stroke-width=".8"/><path d="M7.500 3V8.500" stroke="#fff" stroke-width="2"/><circle cx="7.500" cy="11.300" r="1.200" fill="#fff"/></svg>
<div class="dd" style="left:727px;top:14px;border-top:none;border-bottom:4px solid #fff"></div>
<div class="t c" style="left:778px;top:10px;width:22px;font-size:11px;overflow:hidden">面</div>
<div class="t c" style="left:890px;top:10px;width:50px;font-size:11px;overflow:hidden">1ﾎﾞﾃﾞｨ</div>
<div class="dd" style="left:994px;top:8px;border-top:none;border-bottom:5px solid #6f8aa8"></div><div class="dd" style="left:994px;top:19px;border-top:5px solid #6f8aa8"></div>
<svg class="a" style="left:1009px;top:8px" width="18" height="17" viewBox="0 0 18 17"><path d="M2 2V13L5 10.500 7 15 9 14 7 10H10.500Z" fill="#fff" stroke="#111" stroke-width=".9"/><path d="M10 3Q16 3 15 9Q14 12.500 11 13" fill="none" stroke="#7ab8f0" stroke-width="1.800"/><path d="M8.500 1 12 3.500 9 6Z" fill="#7ab8f0"/></svg>
<svg class="a" style="left:1035px;top:8px" width="12" height="16" viewBox="0 0 12 16"><path d="M2 1V12.500L5 10 7 14.500 9 13.500 7 9.500H10.500Z" fill="#fff" stroke="#111" stroke-width=".9"/></svg>
<div class="dd" style="left:1054px;top:14px;border-top:none;border-bottom:4px solid #fff"></div>
<svg class="a" style="left:1068px;top:9px" width="17" height="14" viewBox="0 0 17 14"><rect x="1.500" y="1.500" width="14" height="11" fill="none" stroke="#7ab8f0" stroke-width="1.800" stroke-dasharray="3.500 2"/></svg>
<div class="dd" style="left:1089px;top:14px;border-top:none;border-bottom:4px solid #fff"></div>
<svg class="a" style="left:1104px;top:7px" width="18" height="18" viewBox="0 0 18 18"><path d="M9 1 12 4.500H10V8H13.500V6L17 9 13.500 12V10H10V13.500H12L9 17 6 13.500H8V10H4.500V12L1 9 4.500 6V8H8V4.500H6Z" fill="#7ab8f0"/><path d="M3.500 4.500Q9 -.5 14.500 4.500" fill="none" stroke="#7ab8f0" stroke-width="1.600"/></svg>
<div class="dd" style="left:1125px;top:14px;border-top:none;border-bottom:4px solid #fff"></div>
<svg class="a" style="left:1139px;top:8px" width="16" height="16" viewBox="0 0 18 18"><path d="M9 .5 12.200 4.200H10.100V7.900H13.800V5.800L17.500 9 13.800 12.200V10.100H10.100V13.800H12.200L9 17.500 5.800 13.800H7.900V10.100H4.200V12.200L.5 9 4.200 5.800V7.900H7.900V4.200H5.800Z" fill="#7ab8f0"/></svg>
<svg class="a" style="left:1163px;top:8px" width="17" height="17" viewBox="0 0 18 18"><circle cx="7" cy="7" r="5.200" fill="#fff" stroke="#7ab8f0" stroke-width="2"/><path d="M11 11 16.500 16.500" stroke="#7ab8f0" stroke-width="3" stroke-linecap="round"/></svg>
<div class="dd" style="left:1184px;top:14px;border-top:none;border-bottom:4px solid #fff"></div>
<svg class="a" style="left:1198px;top:10px" width="18" height="13" viewBox="0 0 18 13"><path d="M1 12 4 4 6 6.500 16 1 17.500 4 8 9 10 11.500Z" fill="#7ab8f0"/></svg>
<svg class="a" style="left:1222px;top:10px" width="18" height="13" viewBox="0 0 18 13"><path d="M17 1 14 9 12 6.500 2 12 .5 9 10 4 8 1.500Z" fill="#7ab8f0"/></svg>

</div>
</body>
</html>
